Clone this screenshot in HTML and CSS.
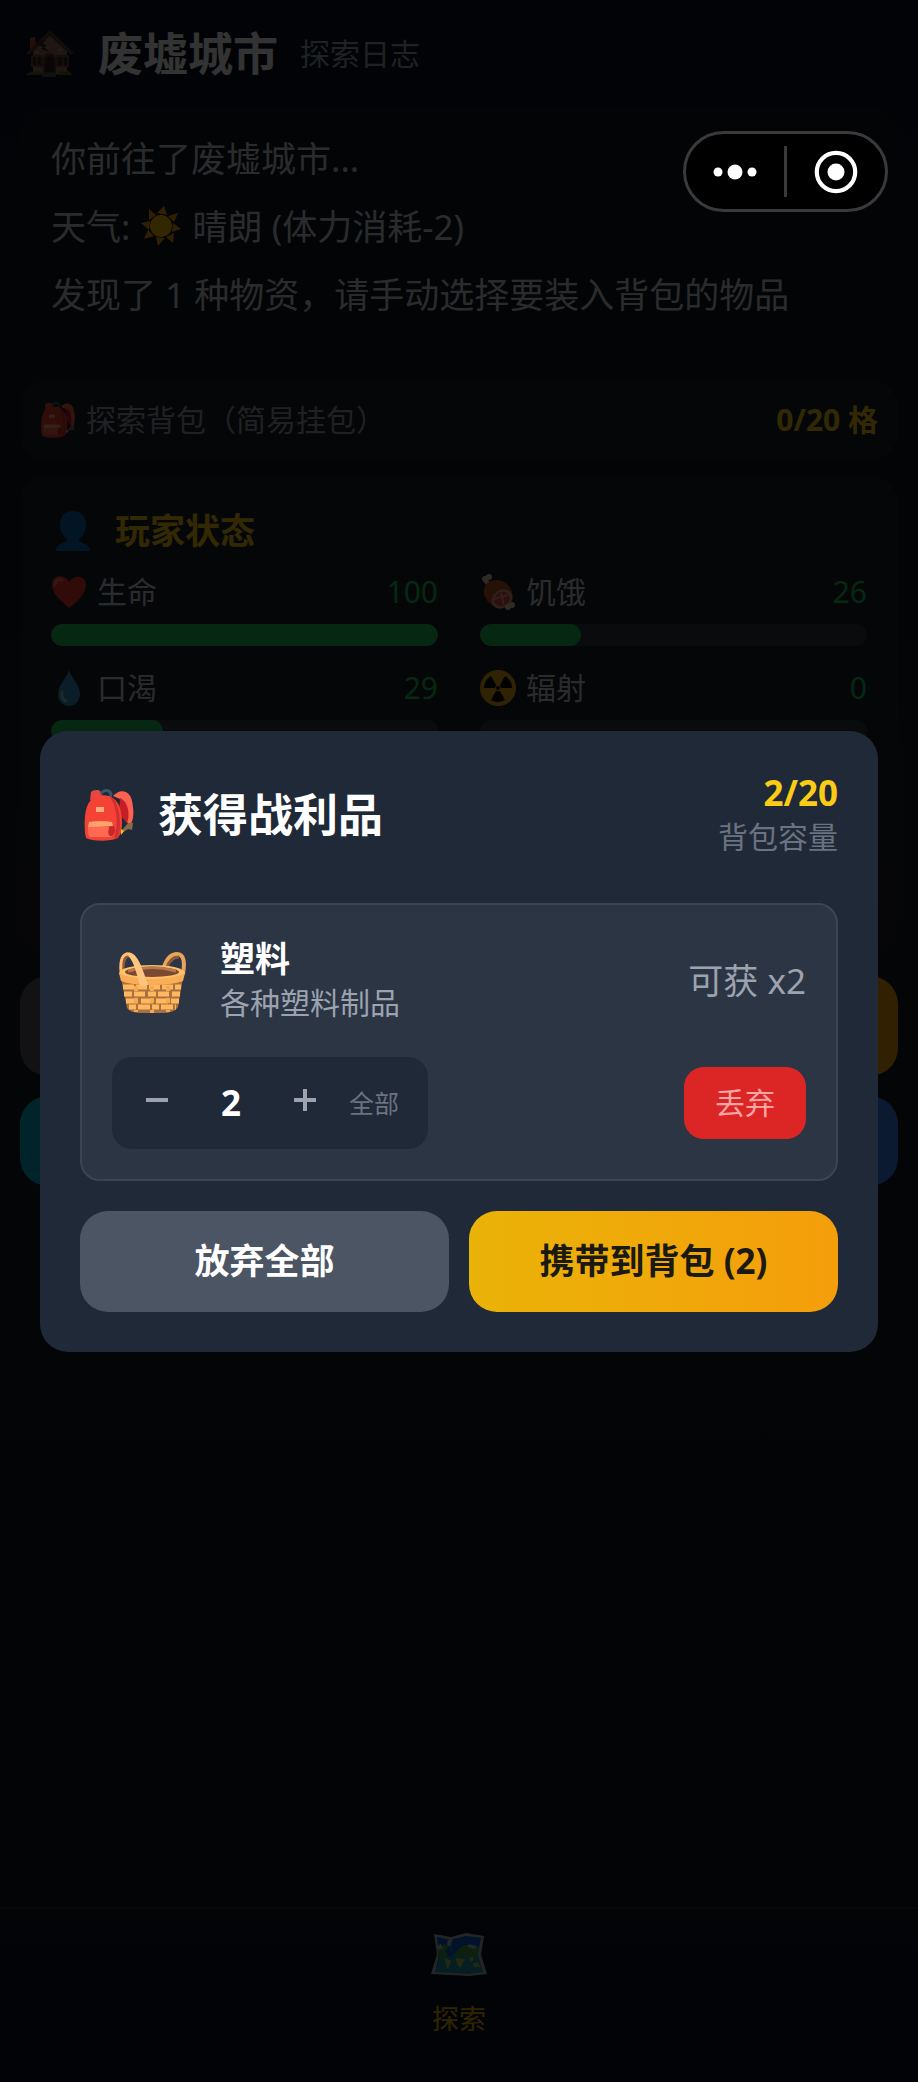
FILE: index.html
```html
<!DOCTYPE html>
<html lang="zh-CN">
<head>
<meta charset="utf-8">
<meta name="viewport" content="width=device-width, initial-scale=1">
<title>废墟城市</title>
<link rel="stylesheet" href="styles.css">
</head>
<body>
<svg width="0" height="0" class="defs" aria-hidden="true">
  <symbol id="backpack" viewBox="0 0 50 52">
    <path d="M17 8C16 1 25 -1 27 5L26 9" fill="none" stroke="#37566a" stroke-width="3"/>
    <path d="M6 11L7 3C8 1 14 0 16 2L18 9Z" fill="#e8473f"/>
    <path d="M29 7C36-1 46 1 48 12C50 22 50 29 47 35L42 33C43 23 42 14 36 10Z" fill="#ff6150"/>
    <path d="M36 9C45 13 46 27 43 34L35 25Z" fill="#c41f27"/>
    <path d="M38 41L44 34L49 34L48 41L44 40L38 44Z" fill="#8a6947"/>
    <path d="M36 39L40 42L37 46Z" fill="#fbc02d"/>
    <path d="M1 44C0 29 1 16 8 10C18 3 32 6 36 19C39 30 39 42 34 49C25 53 7 52 2 49Z" fill="#f44336"/>
    <path d="M29 9C36 17 38 36 34 49L30 50C34 37 34 20 26 8Z" fill="#d32f2f"/>
    <path d="M12 18H20V23H12Z" fill="#ffab78"/>
    <path d="M4 38H29V46Q28 48 26 48H6Q4 47 4 43Z" fill="#ff6b52"/>
    <path d="M25 38Q30 33 31 41Q30 48 26 47Q23 46 25 38Z" fill="#c62828"/>
    <path d="M5 33Q17 31 28 33L29 37Q17 38 4 38Z" fill="#ffa270"/>
  </symbol>
</svg>

<div class="page">
  <header class="topbar">
    <svg class="house" viewBox="0 0 48 48" aria-hidden="true">
      <path d="M4 8L9 7L10 15L4 20Z" fill="#b6512c"/>
      <path d="M7 21L23 5L41 21V44H7Z" fill="#9c7165"/>
      <path d="M0 23L22 2Q24 0 26 2L48 23L45 25L24 6L3 25Z" fill="#54382e"/>
      <path d="M14 11L20 10L17 13L21 16L18 17L24 22L15 19L17 17L12 15Z" fill="#332623"/>
      <path d="M5 25H17V37H5Z" fill="#6c4438"/><path d="M7 27H15V35H7Z" fill="#302822"/>
      <path d="M30 25H43V37H30Z" fill="#6c4438"/><path d="M32 27H41V35H32Z" fill="#302822"/>
      <path d="M11 26V36M37 26V36" stroke="#8b5b44" stroke-width="1"/>
      <path d="M17 43V29Q17 23 23 23Q30 23 30 29V43Z" fill="#5d3d30"/>
      <path d="M19 42V29Q23 23 28 29V42Z" fill="#30221e"/>
      <path d="M10 22L13 23M32 19L36 21" stroke="#bd8b79" stroke-width="2"/>
      <path d="M0 45Q5 39 9 43Q13 38 16 45ZM31 45Q34 39 38 42Q44 39 46 45Z" fill="#5a6822"/>
      <path d="M16 43H30V47H16Z" fill="#46565d"/>
    </svg>
    <h1>废墟城市</h1>
    <span class="subtitle">探索日志</span>
  </header>

  <main class="content">
    <section class="log">
      <p>你前往了废墟城市...</p>
      <p>天气: <svg class="sun" viewBox="0 0 40 40" aria-hidden="true"><path d="M23 0L26 9L16 7ZM37 7L33 16L27 10ZM40 23L31 26L32 17ZM32 37L25 31L33 27ZM17 40L15 31L24 32ZM3 33L7 24L13 30ZM0 17L9 15L8 24ZM8 3L15 9L8 14Z" fill="#f59a10"/><circle cx="20" cy="20" r="11" fill="#fbc400"/></svg> 晴朗 (体力消耗-2)</p>
      <p>发现了 1 种物资，请手动选择要装入背包的物品</p>
    </section>

    <section class="bag">
      <span class="bag-name"><svg class="bag-icon" aria-hidden="true"><use href="#backpack"/></svg>探索背包（简易挂包）</span>
      <strong>0/20 格</strong>
    </section>

    <section class="status">
      <h2><svg viewBox="0 0 36 40" aria-hidden="true"><path d="M18 0C27 0 32 7 31 15C30 23 26 27 24 28C23 33 35 31 35 40H1C1 31 13 33 12 28C8 25 5 20 5 13C5 5 10 0 18 0Z" fill="#0568b5"/></svg>玩家状态</h2>
      <div class="stats">
        <div class="stat">
          <div class="stat-line"><svg viewBox="0 0 36 36" aria-hidden="true"><path d="M18 34C12 28 1 21 1 11C1 0 14 0 18 8C23 0 35 1 35 11C35 21 24 29 18 34Z" fill="#f03a34"/><path d="M4 11C5 6 8 4 11 6" fill="none" stroke="#ff7468" stroke-width="3" stroke-linecap="round"/></svg><span>生命</span><b>100</b></div>
          <div class="bar"><i style="width:100%"></i></div>
        </div>
        <div class="stat">
          <div class="stat-line"><svg viewBox="0 0 36 36" aria-hidden="true"><path d="M6 7L11 13M25 28L30 34" stroke="#f0cfbd" stroke-width="5"/><circle cx="5" cy="5" r="3" fill="#f0cfbd"/><circle cx="9" cy="3" r="3" fill="#f0cfbd"/><path d="M5 23C1 11 9 5 18 6C28 7 35 18 32 27C27 39 10 34 5 23Z" fill="#b8561f"/><ellipse cx="22" cy="25" rx="11" ry="9" transform="rotate(-35 22 25)" fill="#ee9a83"/><ellipse cx="22" cy="25" rx="8" ry="7" transform="rotate(-35 22 25)" fill="#d94b47"/><path d="M14 25L28 21M21 19L24 31" stroke="#ee9a83" stroke-width="2"/><circle cx="28" cy="33" r="3" fill="#f0cfbd"/><circle cx="32" cy="31" r="3" fill="#f0cfbd"/></svg><span>饥饿</span><b>26</b></div>
          <div class="bar"><i style="width:26%"></i></div>
        </div>
        <div class="stat">
          <div class="stat-line"><svg viewBox="0 0 36 36" aria-hidden="true"><path d="M18 0C20 8 29 15 29 24C29 31 24 36 18 36C12 36 7 31 7 24C7 15 16 8 18 0Z" fill="#3592c9"/><path d="M11 22Q10 29 15 31" fill="none" stroke="#8fcce4" stroke-width="3" stroke-linecap="round"/></svg><span>口渴</span><b>29</b></div>
          <div class="bar"><i style="width:29%"></i></div>
        </div>
        <div class="stat">
          <div class="stat-line"><svg viewBox="0 0 36 36" aria-hidden="true"><circle cx="18" cy="18" r="18" fill="#eeb01a"/><path d="M15 18H4A14 14 0 0 1 11 6L16 15ZM21 18H32A14 14 0 0 0 25 6L20 15ZM16 21L11 30A14 14 0 0 0 25 30L20 21Z" fill="#090909"/><circle cx="18" cy="18" r="2" fill="#090909"/></svg><span>辐射</span><b>0</b></div>
          <div class="bar"><i style="width:0%"></i></div>
        </div>
      </div>
    </section>

    <div class="actions">
      <span class="tile tall gray"></span><span class="tile tall amber"></span>
      <span class="tile teal"></span><span class="tile blue"></span>
    </div>
  </main>

  <nav class="tabbar">
    <a href="#explore">
      <svg viewBox="0 0 56 44" aria-hidden="true">
        <path d="M3 1L20 4L35 0L53 3L50 22L56 41L38 43L20 42L0 41L6 21Z" fill="#a9b4bd"/>
        <path d="M6 4L20 7L35 3L50 5L47 22L52 39L38 41L20 40L4 39L8 21Z" fill="#2191aa"/>
        <path d="M6 4L20 7V23L8 24ZM22 6L35 3L50 5L48 14L38 12L27 17L20 24Z" fill="#1159cf"/>
        <path d="M7 12L11 15L13 10L17 14L14 18L17 22L13 25L7 23ZM27 17L33 12L40 13L48 15L46 23L27 24L24 21Z" fill="#41a043"/>
        <path d="M6 13L10 11L12 15L8 17ZM35 13L39 11L47 14L42 16ZM17 7L21 6L19 14L16 12Z" fill="#b7c5d0"/>
        <path d="M14 25L20 28L17 36L15 33ZM25 25L34 26L29 35L26 31ZM42 30L47 29L49 34L43 34ZM37 25L43 24L41 29Z" fill="#b0cd45"/>
      </svg>
      <span>探索</span>
    </a>
  </nav>
</div>

<div class="overlay">
  <section class="modal" role="dialog" aria-modal="true" aria-labelledby="loot-title">
    <header class="modal-head">
      <svg class="modal-icon" aria-hidden="true"><use href="#backpack"/></svg>
      <h2 id="loot-title">获得战利品</h2>
      <div class="capacity"><strong>2/20</strong><span>背包容量</span></div>
    </header>

    <article class="item">
      <div class="item-info">
        <svg class="basket" viewBox="0 0 68 62" aria-hidden="true">
          <path d="M4 20C4 8 6 3 11 3C17 5 20 12 23 22" fill="none" stroke="#8d5739" stroke-width="5"/>
          <path d="M46 15C49 6 54 2 59 2C66 2 67 10 65 22" fill="none" stroke="#e8a45a" stroke-width="4"/>
          <path d="M49 15C52 8 56 5 61 5" fill="none" stroke="#8d5739" stroke-width="3"/>
          <path d="M3 26L9 56Q12 61 24 61H43Q57 61 60 55L65 26Z" fill="#a8713f"/>
          <g fill="none" stroke="#ffb85f" stroke-width="5">
            <path d="M5 35H63" stroke-dasharray="11 2"/><path d="M6 42H62" stroke-dasharray="8 2 11 3"/><path d="M8 49H61" stroke-dasharray="12 3"/><path d="M11 55H58" stroke-dasharray="7 2 12 2"/>
          </g>
          <path d="M18 34V60M34 34V61M50 34V60" stroke="#f5aa52" stroke-width="4" stroke-dasharray="5 7"/>
          <ellipse cx="34" cy="21" rx="33" ry="8" fill="#ffc06b"/>
          <ellipse cx="34" cy="20" rx="27" ry="5" fill="#7b4931"/>
          <path d="M10 19Q34 12 58 19" fill="none" stroke="#b8794a" stroke-width="3"/>
          <path d="M1 21Q8 26 34 27Q60 26 67 21L65 29Q55 33 34 33Q12 33 3 29Z" fill="#fbad55"/>
          <path d="M3 19C2 7 5 2 10 2" fill="none" stroke="#ffbd6d" stroke-width="3"/>
          <path d="M7 1C17-2 22 8 30 33L22 34C18 20 16 7 7 1Z" fill="#ffc57e"/>
        </svg>
        <div class="item-copy"><h3>塑料</h3><p>各种塑料制品</p></div>
        <span class="available">可获 x2</span>
      </div>
      <div class="item-controls">
        <div class="qty">
          <button type="button" class="step" aria-label="减少"><svg viewBox="0 0 22 22" aria-hidden="true"><path d="M0 11H22"/></svg></button>
          <output>2</output>
          <button type="button" class="step" aria-label="增加"><svg viewBox="0 0 22 22" aria-hidden="true"><path d="M0 11H22M11 0V22"/></svg></button>
          <button type="button" class="all">全部</button>
        </div>
        <button type="button" class="discard">丢弃</button>
      </div>
    </article>

    <footer class="modal-actions">
      <button type="button" class="abandon">放弃全部</button>
      <button type="button" class="carry">携带到背包 (2)</button>
    </footer>
  </section>
</div>

<div class="capsule">
  <button type="button" aria-label="更多"><svg width="44" height="16" viewBox="0 0 44 16" aria-hidden="true"><g fill="#fff"><circle cx="5" cy="8" r="4.5"/><circle cx="22" cy="8" r="7.5"/><circle cx="39" cy="8" r="4.5"/></g></svg></button>
  <span class="divider"></span>
  <button type="button" aria-label="关闭"><svg width="44" height="44" viewBox="0 0 44 44" aria-hidden="true"><circle cx="22" cy="22" r="19.2" fill="none" stroke="#fff" stroke-width="4.2"/><circle cx="22" cy="22" r="8.5" fill="#fff"/></svg></button>
</div>
</body>
</html>
```
FILE: styles.css
```css
* { box-sizing: border-box; }

body, h1, h2, h3, p { margin: 0; }

body {
  background: #0a121e;
  color: #fff;
  font-family: "Noto Sans", "Noto Sans CJK SC", sans-serif;
  font-size: 30px;
  line-height: 44px;
}

button {
  border: 0;
  padding: 0;
  background: none;
  color: inherit;
  font: inherit;
}

svg { flex: none; }
.defs { position: absolute; }

/* Page under the dialog */
.page {
  display: flex;
  flex-direction: column;
  min-height: 100vh;
  background: linear-gradient(#0a121e, #171c24 50%, #0a121e);
}

.topbar {
  display: flex;
  align-items: center;
  height: 108px;
  padding: 0 26px;
}
.house { width: 48px; height: 48px; margin-right: 24px; }
.topbar h1 { font-size: 45px; line-height: 60px; }
.subtitle { margin-left: 22px; color: #9ca3af; }

.content {
  display: flex;
  flex: 1;
  flex-direction: column;
  gap: 16px;
  padding: 0 20px;
}

.log {
  padding: 17px 31px 35px;
  border-radius: 28px;
  background: #0c141f;
  color: #d1d5db;
  font-size: 35px;
  line-height: 68px;
}
.sun { width: 40px; height: 40px; margin: 0 2px; vertical-align: -6px; }

.bag {
  display: flex;
  align-items: center;
  justify-content: space-between;
  height: 80px;
  padding: 0 20px;
  border-radius: 28px;
  background: #1a1f29;
  color: #9ca3af;
}
.bag-name { display: flex; align-items: center; }
.bag-icon { width: 36px; height: 36px; margin-right: 10px; }
.bag strong { color: #facc15; }

.status {
  min-height: 484px;
  padding: 30px 31px;
  border-radius: 28px;
  background: linear-gradient(#1a1f29, #191d26);
}
.status h2 {
  display: flex;
  align-items: center;
  gap: 24px;
  padding-left: 4px;
  color: #facc15;
  font-size: 35px;
  line-height: 50px;
}
.status h2 svg { width: 36px; height: 40px; }
.stats {
  display: grid;
  grid-template-columns: 1fr 1fr;
  gap: 20px 42px;
  margin-top: 14px;
}
.stat-line {
  display: flex;
  align-items: center;
  gap: 10px;
  height: 44px;
  margin-bottom: 10px;
  color: #d1d5db;
}
.stat-line svg { width: 36px; height: 36px; }
.stat-line b { margin-left: auto; color: #22c55e; font-weight: 400; }
.bar {
  height: 22px;
  overflow: hidden;
  border-radius: 11px;
  background: #343840;
}
.bar i {
  display: block;
  height: 100%;
  border-radius: 11px;
  background: #22c55e;
}

.actions {
  display: grid;
  grid-template-columns: 1fr 1fr;
  gap: 20px;
}
.tile { height: 90px; border-radius: 28px; }
.tall { height: 100px; }
.gray { background: #5c5d65; }
.amber { background: #f59e0b; }
.teal { background: #06b6d4; }
.blue { background: #3b82f6; }

.tabbar {
  display: flex;
  justify-content: center;
  height: 175px;
  padding-top: 24px;
  border-top: 2px solid #2a303b;
}
.tabbar a {
  display: flex;
  flex-direction: column;
  align-items: center;
  gap: 20px;
  color: #eab308;
  font-size: 27px;
  text-decoration: none;
}
.tabbar svg { width: 56px; height: 44px; }

/* Loot dialog */
.overlay {
  position: fixed;
  inset: 0;
  display: flex;
  align-items: center;
  padding: 0 40px;
  background: rgba(0, 0, 0, 0.8);
}
.modal {
  flex: 1;
  padding: 40px;
  border-radius: 28px;
  background: #1f2937;
}

.modal-head {
  display: flex;
  align-items: center;
  height: 88px;
  margin-bottom: 44px;
}
.modal-icon { width: 50px; height: 52px; margin: 0 24px 0 4px; }
.modal-head h2 { font-size: 45px; line-height: 60px; }
.capacity {
  display: flex;
  flex-direction: column;
  margin-left: auto;
  color: #6b7280;
  text-align: right;
}
.capacity strong { color: #facc15; font-size: 35px; }

.item {
  padding: 30px;
  border: 2px solid #3b4554;
  border-radius: 20px;
  background: #2c3544;
}
.item-info { display: flex; align-items: center; height: 92px; }
.basket { width: 68px; height: 62px; margin: 4px 34px 0 6px; }
.item-copy h3 { font-size: 35px; line-height: 44px; }
.item-copy p { color: #9ca3af; }
.available { margin-left: auto; color: #9ca3af; font-size: 35px; }

.item-controls {
  display: flex;
  align-items: center;
  justify-content: space-between;
  margin-top: 30px;
}
.qty {
  display: flex;
  align-items: center;
  height: 92px;
  padding: 0 20px 0 10px;
  border-radius: 20px;
  background: #1f2937;
}
.step {
  display: grid;
  place-items: center;
  width: 70px;
  height: 70px;
}
.step svg {
  width: 22px;
  height: 22px;
  margin-bottom: 6px;
  fill: none;
  stroke: #9ca3af;
  stroke-width: 4;
}
.qty output {
  width: 78px;
  font-size: 35px;
  font-weight: 700;
  text-align: center;
}
.all { width: 68px; color: #6b7280; font-size: 25px; }
.discard {
  height: 72px;
  padding: 0 31px;
  border-radius: 20px;
  background: #dc2626;
  color: #fca5a5;
}

.modal-actions {
  display: grid;
  grid-template-columns: 1fr 1fr;
  gap: 20px;
  margin-top: 30px;
}
.modal-actions button {
  height: 101px;
  border-radius: 28px;
  font-size: 35px;
  font-weight: 700;
}
.abandon { background: #4b5563; }
.carry {
  background: linear-gradient(90deg, #eab308, #f59e0b);
  color: #1a1a10;
}

/* Host app capsule */
.capsule {
  position: fixed;
  top: 131px;
  right: 30px;
  display: flex;
  align-items: center;
  width: 205px;
  height: 81px;
  border: 3px solid #3a3a3c;
  border-radius: 41px;
  background: #000;
}
.capsule button {
  display: grid;
  flex: 1;
  place-items: center;
  height: 100%;
}
.divider { width: 3px; height: 51px; background: #3a3a3c; }
```
